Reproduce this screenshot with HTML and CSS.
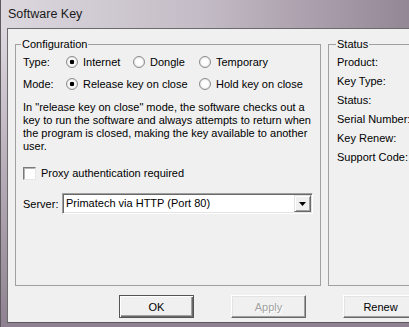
FILE: index.html
```html
<!DOCTYPE html>
<html>
<head>
<meta charset="utf-8">
<link rel="stylesheet" href="styles.css">
</head>
<body>
<div class="window">
  <div class="titlebar">Software Key</div>
  <div class="client">
    <div class="groups">
      <fieldset class="group config">
        <legend>Configuration</legend>
        <div class="options">
          <span class="lbl">Type:</span>
          <label class="opt"><input type="radio" name="type" checked><span>Internet</span></label>
          <label class="opt"><input type="radio" name="type"><span>Dongle</span></label>
          <label class="opt"><input type="radio" name="type"><span>Temporary</span></label>
          <span class="lbl">Mode:</span>
          <label class="opt span2"><input type="radio" name="mode" checked><span>Release key on close</span></label>
          <label class="opt"><input type="radio" name="mode"><span>Hold key on close</span></label>
        </div>
        <p class="desc">In "release key on close" mode, the software checks out a<br>key to run the software and always attempts to return when<br>the program is closed, making the key available to another<br>user.</p>
        <label class="check"><input type="checkbox"><span>Proxy authentication required</span></label>
        <div class="server">
          <span class="lbl">Server:</span>
          <div class="select">
            <span class="value">Primatech via HTTP (Port 80)</span>
            <span class="dropbtn"><svg width="7" height="4" viewBox="0 0 7 4"><path d="M0 0h7L3.5 4z" fill="#000"/></svg></span>
          </div>
        </div>
      </fieldset>
      <fieldset class="group status">
        <legend>Status</legend>
        <ul class="status-list">
          <li>Product:</li>
          <li>Key Type:</li>
          <li>Status:</li>
          <li>Serial Number:</li>
          <li>Key Renew:</li>
          <li>Support Code:</li>
        </ul>
      </fieldset>
    </div>
    <div class="buttons">
      <button class="btn default">OK</button>
      <button class="btn" disabled>Apply</button>
      <button class="btn">Renew</button>
    </div>
  </div>
</div>
</body>
</html>
```
FILE: styles.css
```css
html, body {
  margin: 0;
  padding: 0;
  width: 409px;
  height: 327px;
  overflow: hidden;
  background: #8e8090;
}

.window {
  width: 440px;
  height: 327px;
  box-sizing: border-box;
  border-left: 1px solid #5e5a60;
  background: linear-gradient(to bottom, #e4e0e6 0%, #b9afbb 50%, #8e8090 100%);
  display: flex;
  flex-direction: column;
  font-family: "Liberation Sans", Arial, sans-serif;
  font-size: 11px;
  color: #000;
}

.titlebar {
  height: 28px;
  box-sizing: border-box;
  padding: 1px 0 0 7px;
  line-height: 27px;
  font-size: 12.5px;
  color: #1a1a1a;
  background: linear-gradient(to right, #dcd8de 0%, #c4bcc6 45%, #8d7f8e 100%);
}

.client {
  flex: 1;
  margin: 0 0 4px 6px;
  border-top: 1px solid #6b6b6b;
  border-left: 1px solid #6b6b6b;
  border-bottom: 1px solid #5a5a5a;
  background: #f0f0f0;
  display: flex;
  flex-direction: column;
  padding: 9px 0 4px 7px;
}

.groups {
  flex: 1;
  display: flex;
  gap: 7px;
  min-height: 0;
}

.group {
  margin: 0;
  border: 1px solid #a0a0a0;
  min-width: 0;
  box-sizing: border-box;
}

.group legend {
  padding: 0 1px;
  line-height: 13px;
  height: 13px;
}

.config {
  width: 306px;
  padding: 3px 7px 0 7px;
}

.config legend {
  margin-left: -2px;
}

.status {
  width: 110px;
  padding: 2px 0 0 8px;
}

.status legend {
  margin-left: -1px;
}

.options {
  display: grid;
  grid-template-columns: 43px 67px 66px auto;
  grid-auto-rows: 16px;
  row-gap: 6px;
  align-items: center;
}

.lbl {
  line-height: 16px;
}

.opt {
  display: flex;
  align-items: center;
  gap: 5px;
  white-space: nowrap;
  line-height: 16px;
}

.span2 {
  grid-column: span 2;
}

.opt input {
  appearance: none;
  -webkit-appearance: none;
  margin: 0;
  width: 12px;
  height: 12px;
  border-radius: 50%;
  border: 1px solid #8c8c8c;
  box-sizing: border-box;
  background: radial-gradient(circle at 50% 50%, #ffffff 0 3px, #f1f1f1 4px, #dcdcdc 6px);
  flex: none;
}

.opt input:checked {
  background: radial-gradient(circle at 50% 50%, #000 0 2px, #fff 2.6px 3px, #f1f1f1 4px, #dcdcdc 6px);
}

.desc {
  margin: 9px 0 0 0;
  line-height: 13px;
  white-space: nowrap;
}

.check {
  margin-top: 12px;
  display: flex;
  align-items: center;
  gap: 5px;
  height: 16px;
  line-height: 16px;
}

.check input {
  appearance: none;
  -webkit-appearance: none;
  margin: 0;
  width: 13px;
  height: 13px;
  box-sizing: border-box;
  border: 1px solid;
  border-color: #7a7a7a #e6e6e6 #e6e6e6 #7a7a7a;
  box-shadow: inset 1px 1px 0 #b4b4b4;
  background: #fff;
  flex: none;
}

.server {
  margin-top: 12px;
  display: flex;
  align-items: center;
  height: 21px;
}

.server .lbl {
  width: 39px;
  flex: none;
}

.select {
  flex: 1;
  height: 21px;
  box-sizing: border-box;
  border: 1px solid;
  border-color: #a0a0a0 #ffffff #ffffff #a0a0a0;
  box-shadow: inset 1px 1px 0 #696969, inset -1px -1px 0 #e3e3e3;
  background: #fff;
  display: flex;
  align-items: stretch;
  padding: 1px;
}

.select .value {
  flex: 1;
  padding-left: 2px;
  line-height: 17px;
  white-space: nowrap;
}

.dropbtn {
  width: 17px;
  flex: none;
  box-sizing: border-box;
  border: 1px solid;
  border-color: #e3e3e3 #696969 #696969 #e3e3e3;
  box-shadow: inset 1px 1px 0 #fff, inset -1px -1px 0 #a0a0a0;
  background: #f0f0f0;
  display: flex;
  align-items: center;
  justify-content: center;
}

.status-list {
  list-style: none;
  margin: 0;
  padding: 0;
}

.status-list li {
  line-height: 19px;
  white-space: nowrap;
}

.buttons {
  margin-top: 9px;
  display: flex;
  gap: 37px;
  padding-left: 104px;
}

.btn {
  width: 75px;
  height: 23px;
  flex: none;
  box-sizing: border-box;
  margin: 0;
  padding: 0;
  font: inherit;
  color: #000;
  background: #f0f0f0;
  border: 1px solid;
  border-color: #fff #696969 #696969 #fff;
  box-shadow: inset -1px -1px 0 #a0a0a0, inset 1px 1px 0 #e3e3e3;
}

.btn.default {
  border-color: #555;
  box-shadow: inset 1px 1px 0 #fff, inset -1px -1px 0 #696969, inset -2px -2px 0 #a0a0a0;
}

.btn:disabled {
  color: #a0a0a0;
  text-shadow: 1px 1px 0 #fff;
}
```
